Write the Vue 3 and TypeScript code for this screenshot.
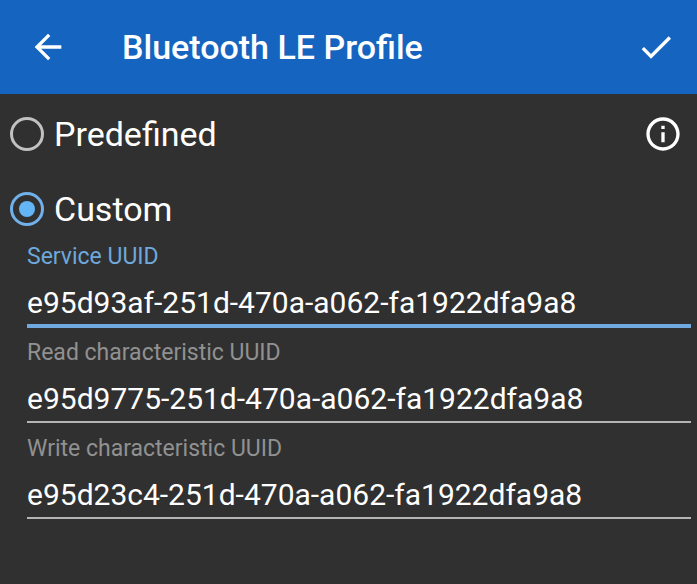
<script setup lang="ts">
import { ref } from 'vue'

type Mode = 'predefined' | 'custom'
interface Field {
  id: string
  label: string
  value: string
}

const mode = ref<Mode>('custom')
const active = ref('service')
const fields = ref<Field[]>([
  { id: 'service', label: 'Service UUID', value: 'e95d93af-251d-470a-a062-fa1922dfa9a8' },
  { id: 'read', label: 'Read characteristic UUID', value: 'e95d9775-251d-470a-a062-fa1922dfa9a8' },
  { id: 'write', label: 'Write characteristic UUID', value: 'e95d23c4-251d-470a-a062-fa1922dfa9a8' },
])
</script>

<template>
  <div class="screen">
    <header class="bar">
      <button class="icon-button" type="button" aria-label="Back">
        <svg viewBox="0 0 24 24"><path d="M20 11H7.830l5.590-5.590L12 4l-8 8 8 8 1.410-1.410L7.830 13H20z" /></svg>
      </button>
      <h1 class="title">Bluetooth LE Profile</h1>
      <button class="icon-button" type="button" aria-label="Save">
        <svg viewBox="0 0 24 24"><path d="M9 16.170L4.830 12l-1.420 1.410L9 19 21 7l-1.410-1.410z" /></svg>
      </button>
    </header>

    <main class="content">
      <div class="options">
        <div class="option">
          <label class="choice">
            <input v-model="mode" class="radio" type="radio" name="mode" value="predefined" />
            <span>Predefined</span>
          </label>
          <button class="icon-button" type="button" aria-label="Information">
            <svg viewBox="0 0 24 24">
              <path d="M11 7h2v2h-2zm0 4h2v6h-2zm1-9C6.480 2 2 6.480 2 12s4.480 10 10 10 10-4.480 10-10S17.520 2 12 2zm0 18c-4.410 0-8-3.590-8-8s3.590-8 8-8 8 3.590 8 8-3.590 8-8 8z" />
            </svg>
          </button>
        </div>
        <div class="option">
          <label class="choice">
            <input v-model="mode" class="radio" type="radio" name="mode" value="custom" />
            <span>Custom</span>
          </label>
        </div>
      </div>

      <div class="fields">
        <div v-for="field in fields" :key="field.id" class="field" :class="{ active: active === field.id }">
          <label class="caption" :for="field.id">{{ field.label }}</label>
          <input
            :id="field.id"
            v-model="field.value"
            class="entry"
            type="text"
            spellcheck="false"
            @focus="active = field.id"
          />
        </div>
      </div>
    </main>
  </div>
</template>

<style>
body {
  background: #303030;
}
</style>

<style scoped>
.screen {
  min-height: 100vh;
  background: #303030;
  color: #fff;
  font-family: Roboto, 'Liberation Sans', sans-serif;
}

.bar {
  display: flex;
  align-items: center;
  height: 94px;
  padding: 0 21px 0 28px;
  box-sizing: border-box;
  background: #1565c0;
}

.title {
  flex: 1;
  margin: 0 0 0 54px;
  font-size: 34px;
  line-height: 40px;
  font-weight: 500;
}

.icon-button {
  flex: none;
  width: 40px;
  height: 40px;
  padding: 0;
  border: 0;
  background: none;
  color: inherit;
}

.icon-button svg {
  display: block;
  width: 40px;
  height: 40px;
  fill: currentColor;
}

.content {
  padding-top: 6px;
}

.options {
  display: flex;
  flex-direction: column;
  gap: 7px;
}

.option {
  display: flex;
  align-items: center;
  justify-content: space-between;
  height: 68px;
  padding: 0 14px 0 10px;
}

.choice {
  display: flex;
  align-items: center;
  gap: 10px;
  font-size: 34px;
  line-height: 40px;
}

.radio {
  appearance: none;
  display: grid;
  place-items: center;
  width: 34px;
  height: 34px;
  margin: 0;
  border: 3px solid #c1c1c1;
  border-radius: 50%;
  outline: none;
}

.radio:checked {
  border-color: #72b0ea;
}

.radio:checked::before {
  content: '';
  width: 16px;
  height: 16px;
  border-radius: 50%;
  background: #64b5f6;
}

.fields {
  display: flex;
  flex-direction: column;
  gap: 13px;
  padding: 1px 6px 20px 27px;
}

.field {
  display: flex;
  flex-direction: column;
}

.caption {
  color: #919191;
  font-size: 23px;
  line-height: 26px;
}

.entry {
  width: 100%;
  height: 57px;
  padding: 9px 0 0;
  box-sizing: border-box;
  border: 0;
  border-bottom: 2px solid #b5b5b5;
  outline: none;
  background: none;
  color: inherit;
  font: inherit;
  font-size: 30px;
}

.active .caption {
  color: #6ea8dc;
}

.active .entry {
  border-color: #6fa9e0;
  box-shadow: 0 1px #6fa9e0, inset 0 -1px #6fa9e0;
}
</style>
